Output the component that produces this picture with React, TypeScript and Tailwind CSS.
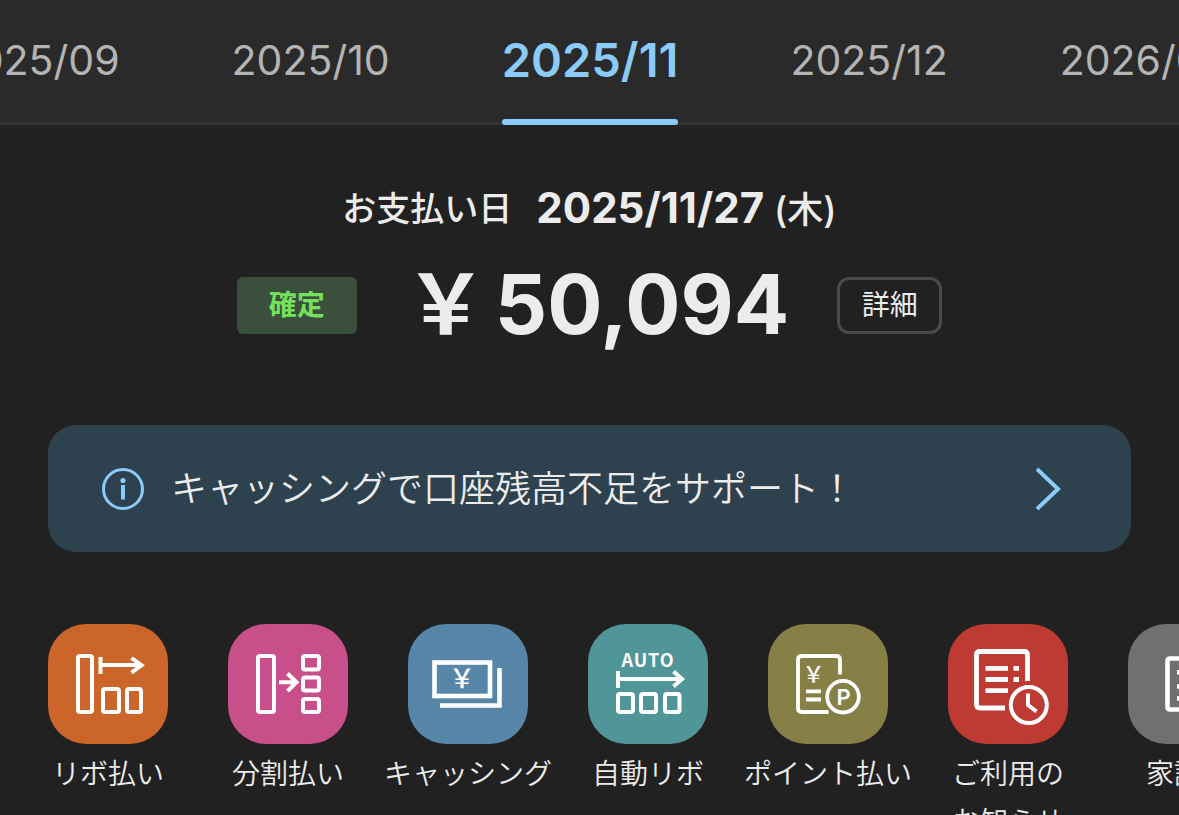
import React from 'react';

interface Shortcut {
  id: string;
  lines: string[];
  tileClass: string;
  icon: React.ReactNode;
}

const MONTHS = ['2025/09', '2025/10', '2025/11', '2025/12', '2026/01'];
const SELECTED_MONTH = '2025/11';

const TileIcon: React.FC<{ width?: number; children: React.ReactNode }> = ({
  width = 4,
  children,
}) => (
  <svg
    viewBox="0 0 120 120"
    className="size-full"
    fill="none"
    stroke="#fff"
    strokeWidth={width}
    aria-hidden="true"
  >
    {children}
  </svg>
);

const SHORTCUTS: Shortcut[] = [
  {
    id: 'revolving',
    lines: ['リボ払い'],
    tileClass: 'bg-[#cb6529]',
    icon: (
      <TileIcon>
        <rect x="30" y="32" width="14" height="56" rx="2" />
        <path d="M52.5 33v17M53 41h41M83.5 34l10 7.3-10 7.3" />
        <rect x="55" y="65" width="16" height="23" rx="2" />
        <rect x="79" y="65" width="14" height="23" rx="2" />
      </TileIcon>
    ),
  },
  {
    id: 'installment',
    lines: ['分割払い'],
    tileClass: 'bg-[#c84f8a]',
    icon: (
      <TileIcon>
        <rect x="30" y="32" width="16" height="56" rx="2" />
        <path d="M51 58.3h18M59.5 49.5l9 8.8-9 8.8" />
        <rect x="75" y="32" width="16" height="13.5" rx="2" />
        <rect x="75" y="53.5" width="16" height="13" rx="2" />
        <rect x="75" y="75" width="16" height="13" rx="2" />
      </TileIcon>
    ),
  },
  {
    id: 'cashing',
    lines: ['キャッシング'],
    tileClass: 'bg-[#5886a8]',
    icon: (
      <TileIcon width={4.6}>
        <rect x="26.5" y="38.5" width="55.5" height="33.5" />
        <path d="M91.5 44v37.5H32" />
        <text
          x="54"
          y="64"
          textAnchor="middle"
          fill="#fff"
          stroke="none"
          className="font-['Noto_Sans_CJK_JP',sans-serif] text-[26px] font-medium"
        >
          ￥
        </text>
      </TileIcon>
    ),
  },
  {
    id: 'auto-revolving',
    lines: ['自動リボ'],
    tileClass: 'bg-[#509598]',
    icon: (
      <TileIcon>
        <text
          x="60"
          y="43"
          textAnchor="middle"
          fill="#fff"
          stroke="none"
          className="font-['Noto_Sans_CJK_JP',sans-serif] text-[18px] font-bold tracking-wider"
        >
          AUTO
        </text>
        <path d="M30 47v17M30 55h64M85.5 47.5l8.5 7.5-8.5 7.5" />
        <rect x="30" y="70" width="15" height="18" rx="2" />
        <rect x="53" y="70" width="15" height="18" rx="2" />
        <rect x="77" y="70" width="14.5" height="18" rx="2" />
      </TileIcon>
    ),
  },
  {
    id: 'points',
    lines: ['ポイント払い'],
    tileClass: 'bg-[#868047]',
    icon: (
      <TileIcon width={3.8}>
        <path d="M72 50.5V36q0-4-4-4H34q-4 0-4 4v48q0 4 4 4h26.5M38 67.3h15M38 75.5h15" />
        <circle cx="75" cy="72.7" r="15.8" />
        <text
          x="45.5"
          y="58"
          textAnchor="middle"
          fill="#fff"
          stroke="none"
          className="font-['Noto_Sans_CJK_JP',sans-serif] text-[22px] font-medium"
        >
          ￥
        </text>
        <text
          x="75.5"
          y="80.5"
          textAnchor="middle"
          fill="#fff"
          stroke="none"
          className="font-['Inter',sans-serif] text-[22px] font-semibold"
        >
          P
        </text>
      </TileIcon>
    ),
  },
  {
    id: 'notices',
    lines: ['ご利用の', 'お知らせ'],
    tileClass: 'bg-[#bd3b33]',
    icon: (
      <TileIcon width={4.8}>
        <path d="M79.5 57V31q0-3.5-3.5-3.5H32q-3.5 0-3.5 3.5v49.5q0 3.5 3.5 3.5h25" />
        <path d="M37.5 44.3H60M37.5 55.5H60M37.5 66.7H60M65.5 44.3h5.5M65.5 55.5h5.5" />
        <circle cx="80.8" cy="81" r="18" strokeWidth="4" />
        <path d="M80 69.5v11.5l8.5 6.5" strokeWidth="4" />
      </TileIcon>
    ),
  },
  {
    id: 'household',
    lines: ['家計簿'],
    tileClass: 'bg-[#707070]',
    icon: (
      <TileIcon width={4.6}>
        <rect x="39.5" y="34.5" width="41" height="51" rx="2" />
        <path d="M49 48.3h22M49 62.5h22M49 74.5h22" />
      </TileIcon>
    ),
  },
];

const MonthTabs: React.FC = () => (
  <nav className="border-b-3 border-[#333333] bg-[#2a2a2a]">
    <div role="tablist" className="flex justify-center gap-[112px] overflow-x-clip pr-2">
      {MONTHS.map((month) => {
        const isSelected = month === SELECTED_MONTH;
        return (
          <button
            key={month}
            type="button"
            role="tab"
            aria-selected={isSelected}
            className={`relative shrink-0 pt-9 pb-[38px] leading-[48px] ${
              isSelected
                ? 'text-[47px] font-semibold text-[#8bcbf8]'
                : 'text-[41px] text-[#b4b4b4]'
            }`}
          >
            {month}
            {isSelected && (
              <span className="absolute inset-x-0 -bottom-[3px] h-1.5 rounded-full bg-[#8bcbf8]" />
            )}
          </button>
        );
      })}
    </div>
  </nav>
);

const PaymentSummary: React.FC = () => (
  <section className="pt-[59px]">
    <div className="flex items-center justify-center gap-6 leading-[48px]">
      <span className="text-[34px] font-medium">お支払い日</span>
      <span className="text-[42px] font-bold">
        2025/11/27 <span className="text-[36px] font-medium">(木)</span>
      </span>
    </div>
    <div className="mt-[21px] flex items-center justify-center gap-12">
      <span className="flex h-[57px] w-[120px] items-center justify-center rounded-md bg-[#3a4f3c] text-[28px] font-bold text-[#74e05c]">
        確定
      </span>
      <strong className="flex gap-2 text-[82px] leading-[100px] font-bold">
        <span>￥</span>
        <span>50,094</span>
      </strong>
      <button
        type="button"
        className="flex h-[57px] w-[105px] items-center justify-center rounded-xl border-3 border-[#4a4a4a] text-[28px]"
      >
        詳細
      </button>
    </div>
  </section>
);

const CashingBanner: React.FC = () => (
  <button
    type="button"
    className="mx-12 mt-[70px] flex h-[127px] shrink-0 items-center rounded-[28px] bg-[#2d414f] pr-[69px] pl-[54px] text-left"
  >
    <svg viewBox="0 0 42 42" className="size-[42px] shrink-0" fill="none" aria-hidden="true">
      <circle cx="21" cy="21" r="19.5" stroke="#8bcbf8" strokeWidth="3" />
      <circle cx="21" cy="12.5" r="2.6" fill="#8bcbf8" />
      <path d="M21 17v14.5" stroke="#8bcbf8" strokeWidth="4" />
    </svg>
    <span className="ml-[27px] flex-1 text-[36px] leading-[48px] font-[350]">
      キャッシングで口座残高不足をサポート！
    </span>
    <svg viewBox="0 0 28 44" className="h-11 w-7 shrink-0" fill="none" aria-hidden="true">
      <path d="M3 2l21 20L3 42" stroke="#8bcbf8" strokeWidth="4" />
    </svg>
  </button>
);

const ShortcutRow: React.FC = () => (
  <ul className="mt-[72px] flex shrink-0 pl-[18px]">
    {SHORTCUTS.map(({ id, lines, tileClass, icon }) => (
      <li key={id} className="w-[180px] shrink-0">
        <a href={`#${id}`} className="flex flex-col items-center">
          <span className={`size-[120px] overflow-hidden rounded-[38px] ${tileClass}`}>{icon}</span>
          <span className="mt-1.5 text-center text-[28px] leading-[48px] font-[350] whitespace-nowrap">
            {lines.map((line) => (
              <span key={line} className="block">
                {line}
              </span>
            ))}
          </span>
        </a>
      </li>
    ))}
  </ul>
);

const App: React.FC = () => (
  <main
    lang="ja"
    className="flex h-screen flex-col overflow-hidden bg-[#212121] font-['Inter','Noto_Sans_CJK_JP',sans-serif] text-[#ececec]"
  >
    <MonthTabs />
    <PaymentSummary />
    <CashingBanner />
    <ShortcutRow />
  </main>
);

export default App;
